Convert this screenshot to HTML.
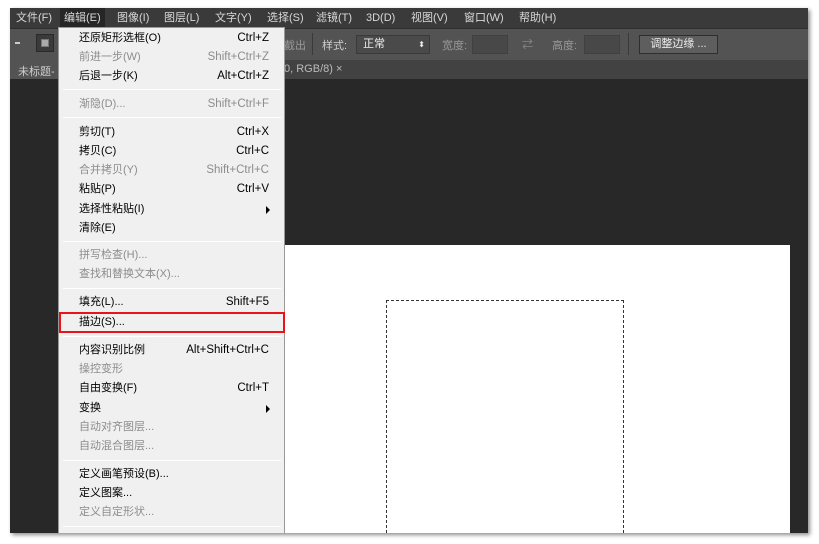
<!DOCTYPE html>
<html><head><meta charset="utf-8"><style>
*{margin:0;padding:0;box-sizing:border-box}
body{width:819px;height:544px;background:#fff;position:relative;overflow:hidden;font-family:"Liberation Sans","Noto Sans CJK SC",sans-serif;font-size:11px}
.a{position:absolute}
#win{left:10px;top:8px;width:798px;height:525px;background:#282828;box-shadow:2px 2px 4px rgba(0,0,0,.45)}
#mb{left:10px;top:8px;width:798px;height:20px;background:#3a3a3a;color:#d8d8d8}
#mb span{position:absolute;top:0;height:20px;line-height:20px}
#tb{left:10px;top:28px;width:798px;height:32px;background:#535353;border-top:1px solid #2e2e2e;color:#d0d0d0}
#tab{left:10px;top:60px;width:798px;height:19px;background:#424242;color:#bbb}
#doc{left:284px;top:245px;width:506px;height:288px;background:#fff}
#sel{left:386px;top:300px;width:238px;height:233px;border:1px dashed #333;border-bottom:none}
#menu{left:58px;top:27px;width:227px;height:506px;background:#f0f0f0;border:1px solid #999;border-bottom:none}
.r{position:absolute;left:20px;width:190px;height:19px;line-height:19px;color:#000}
.r b{font-weight:normal;position:absolute;right:0;top:0;font-size:11.5px}
.g{color:#8c8c8c}
.s{position:absolute;left:4px;width:218px;height:1px;background:#c8c8c8;border-bottom:1px solid #fff}
.ar{position:absolute;right:-1px;top:6px;width:0;height:0;border-left:4px solid #000;border-top:4px solid transparent;border-bottom:4px solid transparent}
</style></head><body>
<div id="win" class="a"></div>
<div id="mb" class="a">
<span style="left:6px">文件(F)</span>
<span style="left:50px;background:#262626;padding:0 4px">编辑(E)</span>
<span style="left:107px">图像(I)</span><span style="left:154px">图层(L)</span><span style="left:205px">文字(Y)</span><span style="left:257px">选择(S)</span><span style="left:306px">滤镜(T)</span><span style="left:356px">3D(D)</span><span style="left:401px">视图(V)</span><span style="left:454px">窗口(W)</span><span style="left:509px">帮助(H)</span>
</div>
<div id="tb" class="a">
<div class="a" style="left:5px;top:13px;width:5px;height:2px;background:#ccc"></div>
<div class="a" style="left:26px;top:5px;width:18px;height:18px;background:#3a3a3a;border:1px solid #2a2a2a"><div style="margin:4px;width:8px;height:8px;background:#aaa;border:1px solid #777"></div></div>
<span class="a" style="left:274px;top:8px;color:#999">截出</span>
<div class="a" style="left:302px;top:4px;width:1px;height:22px;background:#3a3a3a"></div>
<span class="a" style="left:312px;top:8px">样式:</span>
<div class="a" style="left:346px;top:6px;width:74px;height:19px;background:#4a4a4a;border:1px solid #3a3a3a;color:#eee;padding:0 6px;line-height:17px">正常<span style="position:absolute;right:4px;top:0;font-size:8px">⬍</span></div>
<span class="a" style="left:432px;top:8px;color:#999">宽度:</span>
<div class="a" style="left:462px;top:6px;width:36px;height:19px;background:#484848;border:1px solid #404040"></div>
<span class="a" style="left:512px;top:7px;color:#888">⇄</span>
<span class="a" style="left:542px;top:8px;color:#999">高度:</span>
<div class="a" style="left:574px;top:6px;width:36px;height:19px;background:#484848;border:1px solid #404040"></div>
<div class="a" style="left:618px;top:4px;width:1px;height:22px;background:#3a3a3a"></div>
<div class="a" style="left:629px;top:6px;width:79px;height:19px;background:#5e5e5e;border:1px solid #2e2e2e;color:#eee;text-align:center;line-height:17px">调整边缘 ...</div>
</div>
<div id="tab" class="a">
<div class="a" style="left:0;top:0;width:48px;height:19px;background:#535353;padding:3px 0 0 8px;color:#ccc">未标题-</div>
<span class="a" style="left:274px;top:3px">0, RGB/8) ×</span>
</div>
<div id="doc" class="a"></div>
<div id="sel" class="a"></div>
<div id="menu" class="a">
<div class="r" style="top:1px">还原矩形选框(O)<b>Ctrl+Z</b></div>
<div class="r g" style="top:20px">前进一步(W)<b>Shift+Ctrl+Z</b></div>
<div class="r" style="top:39px">后退一步(K)<b>Alt+Ctrl+Z</b></div>
<div class="s" style="top:61px"></div>
<div class="r g" style="top:67px">渐隐(D)...<b>Shift+Ctrl+F</b></div>
<div class="s" style="top:89px"></div>
<div class="r" style="top:95px">剪切(T)<b>Ctrl+X</b></div>
<div class="r" style="top:114px">拷贝(C)<b>Ctrl+C</b></div>
<div class="r g" style="top:133px">合并拷贝(Y)<b>Shift+Ctrl+C</b></div>
<div class="r" style="top:152px">粘贴(P)<b>Ctrl+V</b></div>
<div class="r" style="top:172px">选择性粘贴(I)<i class="ar"></i></div>
<div class="r" style="top:191px">清除(E)</div>
<div class="s" style="top:213px"></div>
<div class="r g" style="top:218px">拼写检查(H)...</div>
<div class="r g" style="top:237px">查找和替换文本(X)...</div>
<div class="s" style="top:260px"></div>
<div class="r" style="top:265px">填充(L)...<b>Shift+F5</b></div>
<div class="r" style="top:285px">描边(S)...</div>
<div class="a" style="left:0;top:284px;width:226px;height:21px;border:2px solid #e8141a"></div>
<div class="s" style="top:308px"></div>
<div class="r" style="top:313px">内容识别比例<b>Alt+Shift+Ctrl+C</b></div>
<div class="r g" style="top:332px">操控变形</div>
<div class="r" style="top:351px">自由变换(F)<b>Ctrl+T</b></div>
<div class="r" style="top:371px">变换<i class="ar"></i></div>
<div class="r g" style="top:390px">自动对齐图层...</div>
<div class="r g" style="top:409px">自动混合图层...</div>
<div class="s" style="top:432px"></div>
<div class="r" style="top:437px">定义画笔预设(B)...</div>
<div class="r" style="top:456px">定义图案...</div>
<div class="r g" style="top:475px">定义自定形状...</div>
<div class="s" style="top:498px"></div>
</div>
</body></html>
